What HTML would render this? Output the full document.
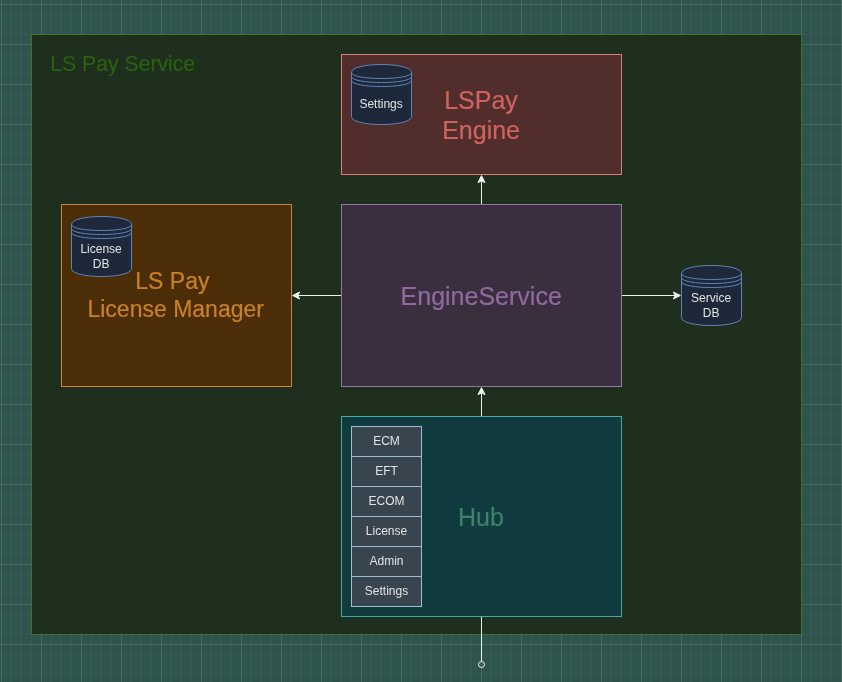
<!DOCTYPE html>
<html>
<head>
<meta charset="utf-8">
<title>LS Pay Service</title>
<style>
html,body{margin:0;padding:0;background:#2d554d;overflow:hidden;}
svg{display:block;will-change:transform;}
text{font-family:"Liberation Sans",sans-serif;}
.b{stroke-width:0.2px;paint-order:stroke;stroke-linejoin:round;}
</style>
</head>
<body>
<svg width="842" height="682" viewBox="0 0 842 682">
<defs>
<pattern id="grid" x="1" y="4" width="40" height="40" patternUnits="userSpaceOnUse">
<path d="M 0 10 L 40 10 M 10 0 L 10 40 M 0 20 L 40 20 M 20 0 L 20 40 M 0 30 L 40 30 M 30 0 L 30 40" fill="none" stroke="#747474" opacity="0.2" stroke-width="1"/>
<path d="M 40 0 L 0 0 0 40" fill="none" stroke="#747474" stroke-width="1"/>
</pattern>
<g id="ds">
<path d="M 0 8 C 0 -2.67 60 -2.67 60 8 L 60 52 C 60 62.67 0 62.67 0 52 Z" fill="#1d293b" stroke="#6082b6" stroke-width="1"/>
<path d="M 0 8 C 0 16 60 16 60 8 M 0 12 C 0 20 60 20 60 12 M 0 16 C 0 24 60 24 60 16" fill="none" stroke="#6082b6" stroke-width="1"/>
</g>
</defs>
<rect width="842" height="682" fill="#2d554d"/>
<rect width="842" height="682" fill="url(#grid)"/>

<!-- container -->
<rect x="31.5" y="34.5" width="770" height="600" fill="#1f2f1e" stroke="#446e2c"/>
<text class="b" x="50.3" y="71" font-size="21.2" fill="#2a6010" stroke="#2a6010">LS Pay Service</text>

<!-- arrows -->
<g stroke="#f0f0f0" fill="#f0f0f0" stroke-miterlimit="10">
<path d="M 481.5 204.5 L 481.5 180.87" fill="none"/>
<path d="M 481.5 175.62 L 485 182.62 L 481.5 180.87 L 478 182.62 Z"/>
<path d="M 481.5 416.5 L 481.5 392.87" fill="none"/>
<path d="M 481.5 387.62 L 485 394.62 L 481.5 392.87 L 478 394.62 Z"/>
<path d="M 341.5 295.5 L 297.87 295.5" fill="none"/>
<path d="M 292.62 295.5 L 299.62 292 L 297.87 295.5 L 299.62 299 Z"/>
<path d="M 621.5 295.5 L 675.13 295.5" fill="none"/>
<path d="M 680.38 295.5 L 673.38 299 L 675.13 295.5 L 673.38 292 Z"/>
<path d="M 481.5 616.5 L 481.5 661.5" fill="none"/>
<circle cx="481.5" cy="664.5" r="3" fill="none"/>
</g>

<!-- LSPay Engine -->
<rect x="341.5" y="54.5" width="280" height="120" fill="#512d2b" stroke="#d7817e"/>
<text class="b" x="481" y="109" font-size="25" fill="#d0625f" stroke="#d0625f" text-anchor="middle">LSPay</text>
<text class="b" x="481.1" y="139" font-size="25" fill="#d0625f" stroke="#d0625f" text-anchor="middle">Engine</text>
<use href="#ds" x="351.5" y="64.5"/>
<text x="381.1" y="108" font-size="12" fill="#e2e2e2" text-anchor="middle">Settings</text>

<!-- License Manager -->
<rect x="61.5" y="204.5" width="230" height="182" fill="#4b2d08" stroke="#c98532"/>
<text class="b" x="172.4" y="289" font-size="23" fill="#ca8027" stroke="#ca8027" text-anchor="middle">LS Pay</text>
<text class="b" x="175.7" y="317" font-size="23" fill="#ca8027" stroke="#ca8027" text-anchor="middle">License Manager</text>
<use href="#ds" x="71.5" y="216.5"/>
<text x="101.1" y="253" font-size="12" fill="#e2e2e2" text-anchor="middle">License</text>
<text x="101.1" y="268" font-size="12" fill="#e2e2e2" text-anchor="middle">DB</text>

<!-- EngineService -->
<rect x="341.5" y="204.5" width="280" height="182" fill="#392f3f" stroke="#9577a3"/>
<text class="b" x="481.2" y="305" font-size="25" fill="#9069a0" stroke="#9069a0" text-anchor="middle">EngineService</text>

<!-- Service DB -->
<use href="#ds" x="681.5" y="265.5"/>
<text x="711.1" y="302" font-size="12" fill="#e2e2e2" text-anchor="middle">Service</text>
<text x="711.1" y="317" font-size="12" fill="#e2e2e2" text-anchor="middle">DB</text>

<!-- Hub -->
<rect x="341.5" y="416.5" width="280" height="200" fill="#103c3f" stroke="#46a8af"/>
<text class="b" x="481" y="526" font-size="25" fill="#3f7f6c" stroke="#3f7f6c" text-anchor="middle">Hub</text>
<g fill="#39454e" stroke="#9fbcd1">
<rect x="351.5" y="426.5" width="70" height="30"/>
<rect x="351.5" y="456.5" width="70" height="30"/>
<rect x="351.5" y="486.5" width="70" height="30"/>
<rect x="351.5" y="516.5" width="70" height="30"/>
<rect x="351.5" y="546.5" width="70" height="30"/>
<rect x="351.5" y="576.5" width="70" height="30"/>
</g>
<g font-size="12" fill="#e2e2e2" text-anchor="middle">
<text x="386.5" y="445">ECM</text>
<text x="386.5" y="475">EFT</text>
<text x="386.5" y="505">ECOM</text>
<text x="386.5" y="535">License</text>
<text x="386.5" y="565">Admin</text>
<text x="386.5" y="595">Settings</text>
</g>

</svg>
</body>
</html>
